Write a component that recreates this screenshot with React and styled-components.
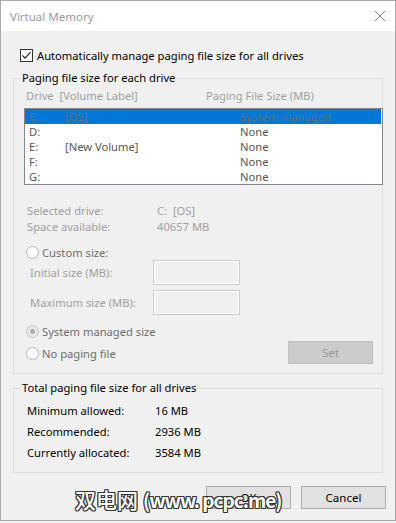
import React from 'react';
import styled, { createGlobalStyle } from 'styled-components';

const GlobalStyle = createGlobalStyle`
  html, body {
    margin: 0;
    padding: 0;
    background: #f0f0f0;
  }
  body {
    font-family: "Noto Sans", "Open Sans", sans-serif;
    font-size: 11.2px;
  }
`;

const Window = styled.div`
  position: relative;
  width: 394px;
  height: 519px;
  border: 1px solid #aaaaaa;
  background: #f0f0f0;
  overflow: hidden;
`;

const TitleBar = styled.div`
  height: 30px;
  background: #ffffff;
  display: flex;
  align-items: center;
  justify-content: space-between;
  padding: 0 9px 0 9px;
  color: #999999;
  font-size: 11.5px;
`;

const Content = styled.div`
  padding: 18px 0 0 12px;
`;

const CheckRow = styled.label`
  display: flex;
  align-items: center;
  gap: 4px;
  height: 13px;
  margin-left: 7px;
  color: #000;
`;

const CheckBox = styled.span`
  width: 11px;
  height: 11px;
  border: 1px solid #333333;
  background: #ffffff;
  display: flex;
  align-items: center;
  justify-content: center;
`;

const Group = styled.fieldset`
  width: 368px;
  margin: ${p => p.$top}px 0 0 0;
  padding: 0 0 ${p => p.$bottom}px 0;
  border: 1px solid #dcdcdc;
  min-width: 0;
`;

const Legend = styled.legend`
  margin-left: 7px;
  padding: 0 1px;
  line-height: 16px;
  color: #000;
`;

const GroupBody = styled.div`
  padding: ${p => p.$top}px 0 0 ${p => p.$left}px;
`;

const Header = styled.div`
  display: grid;
  grid-template-columns: 180px 1fr;
  line-height: 16px;
  color: #a0a0a0;
`;

const List = styled.div`
  margin: 4px 0 0 -2px;
  width: 357px;
  border: 1px solid #828790;
  background: #ffffff;
`;

const ListRow = styled.div`
  display: grid;
  grid-template-columns: 36px 175px 1fr;
  height: 15px;
  line-height: 15px;
  padding-left: 4px;
  margin-right: 1px;
  background: ${p => (p.$selected ? '#0078d7' : 'transparent')};
  color: ${p => (p.$selected ? '#6d6d6d' : '#555555')};
`;

const InfoBlock = styled.div`
  margin: 18px 0 0 1px;
`;

const InfoRow = styled.div`
  display: grid;
  grid-template-columns: 130px 1fr;
  line-height: 16px;
  color: #a0a0a0;
`;

const RadioRow = styled.div`
  display: flex;
  align-items: center;
  gap: 3px;
  height: ${p => p.$h || 16}px;
  margin-top: ${p => p.$top || 0}px;
  color: #6d6d6d;
`;

const Radio = styled.span`
  width: 11px;
  height: 11px;
  border-radius: 50%;
  border: 1px solid ${p => (p.$checked ? '#c4c4c4' : '#b5b5b5')};
  background: ${p => (p.$checked ? '#e8e8e8' : '#ffffff')};
  display: flex;
  align-items: center;
  justify-content: center;

  &::after {
    content: '';
    display: ${p => (p.$checked ? 'block' : 'none')};
    width: 5px;
    height: 5px;
    border-radius: 50%;
    background: #b0b0b0;
  }
`;

const SizeRow = styled.div`
  display: grid;
  grid-template-columns: 123px 87px;
  align-items: center;
  margin: ${p => p.$top}px 0 0 4px;
  color: #a0a0a0;
`;

const SizeInput = styled.div`
  height: 23px;
  border: 1px solid #cccccc;
  box-shadow: inset 0 0 0 1px #ffffff;
  background: #f0f0f0;
`;

const BottomRow = styled.div`
  display: flex;
  justify-content: space-between;
  align-items: flex-start;
  margin-top: 8px;
  padding-right: 9px;
`;

const Button = styled.button`
  width: 85px;
  height: 23px;
  margin-top: ${p => p.$top || 0}px;
  padding: 0;
  font: inherit;
  font-size: 11.5px;
  border: 1px solid ${p => (p.$disabled ? '#bfbfbf' : '#adadad')};
  background: ${p => (p.$disabled ? '#cccccc' : '#e1e1e1')};
  color: ${p => (p.$disabled ? '#999999' : '#000000')};
`;

const TotalRow = styled.div`
  display: grid;
  grid-template-columns: 128px 1fr;
  line-height: 21px;
  color: #000;
`;

const Footer = styled.div`
  display: flex;
  justify-content: flex-end;
  gap: 10px;
  margin: 13px 9px 0 0;
`;

const Watermark = styled.div`
  position: absolute;
  left: 74px;
  top: 483px;
  font-family: "Noto Sans CJK SC", "Noto Sans", sans-serif;
  font-size: 21px;
  font-weight: 500;
  line-height: 30px;
  color: #ffffff;
  white-space: nowrap;
  text-shadow:
    1px 1px 0 #333, -1px -1px 0 #333, 1px -1px 0 #333, -1px 1px 0 #333,
    0 1px 0 #333, 1px 0 0 #333, 0 -1px 0 #333, -1px 0 0 #333;
`;

const WatermarkLatin = styled.span`
  font-size: 19px;
  font-weight: 600;
  letter-spacing: -1px;
  margin-left: 5px;
`;

const drives = [
  { d: 'C:', label: '[OS]', size: 'System managed', selected: true },
  { d: 'D:', label: '', size: 'None' },
  { d: 'E:', label: '[New Volume]', size: 'None' },
  { d: 'F:', label: '', size: 'None' },
  { d: 'G:', label: '', size: 'None' },
];

const totals = [
  ['Minimum allowed:', '16 MB'],
  ['Recommended:', '2936 MB'],
  ['Currently allocated:', '3584 MB'],
];

export default function App() {
  return (
    <>
      <GlobalStyle />
      <Window>
        <TitleBar>
          <span>Virtual Memory</span>
          <svg width="12" height="12" viewBox="0 0 12 12">
            <path d="M1 1 L11 11 M11 1 L1 11" stroke="#808080" strokeWidth="1" fill="none" />
          </svg>
        </TitleBar>
        <Content>
          <CheckRow>
            <CheckBox>
              <svg width="11" height="11" viewBox="0 0 11 11">
                <path d="M1.5 5.5 L4.2 8.2 L9.5 2.2" stroke="#222" strokeWidth="1.2" fill="none" />
              </svg>
            </CheckBox>
            Automatically manage paging file size for all drives
          </CheckRow>

          <Group $top={8} $bottom={9}>
            <Legend>Paging file size for each drive</Legend>
            <GroupBody $top={2} $left={12}>
              <Header>
                <span>Drive&nbsp; [Volume Label]</span>
                <span>Paging File Size (MB)</span>
              </Header>
              <List>
                {drives.map(r => (
                  <ListRow key={r.d} $selected={r.selected}>
                    <span>{r.d}</span>
                    <span>{r.label}</span>
                    <span>{r.size}</span>
                  </ListRow>
                ))}
              </List>
              <InfoBlock>
                <InfoRow><span>Selected drive:</span><span>C:&nbsp; [OS]</span></InfoRow>
                <InfoRow><span>Space available:</span><span>40657 MB</span></InfoRow>
              </InfoBlock>
              <RadioRow $top={10} $h={15}>
                <Radio />
                Custom size:
              </RadioRow>
              <SizeRow $top={0}>
                <span>Initial size (MB):</span>
                <SizeInput />
              </SizeRow>
              <SizeRow $top={5}>
                <span>Maximum size (MB):</span>
                <SizeInput />
              </SizeRow>
              <BottomRow>
                <div>
                  <RadioRow>
                    <Radio $checked />
                    System managed size
                  </RadioRow>
                  <RadioRow $top={6}>
                    <Radio />
                    No paging file
                  </RadioRow>
                </div>
                <Button $disabled $top={18}>Set</Button>
              </BottomRow>
            </GroupBody>
          </Group>

          <Group $top={6} $bottom={9}>
            <Legend>Total paging file size for all drives</Legend>
            <GroupBody $top={4} $left={13}>
              {totals.map(([k, v]) => (
                <TotalRow key={k}>
                  <span>{k}</span>
                  <span>{v}</span>
                </TotalRow>
              ))}
            </GroupBody>
          </Group>

          <Footer>
            <Button>OK</Button>
            <Button>Cancel</Button>
          </Footer>
        </Content>
        <Watermark>
          双电网<WatermarkLatin>(www. pcpc.me)</WatermarkLatin>
        </Watermark>
      </Window>
    </>
  );
}
